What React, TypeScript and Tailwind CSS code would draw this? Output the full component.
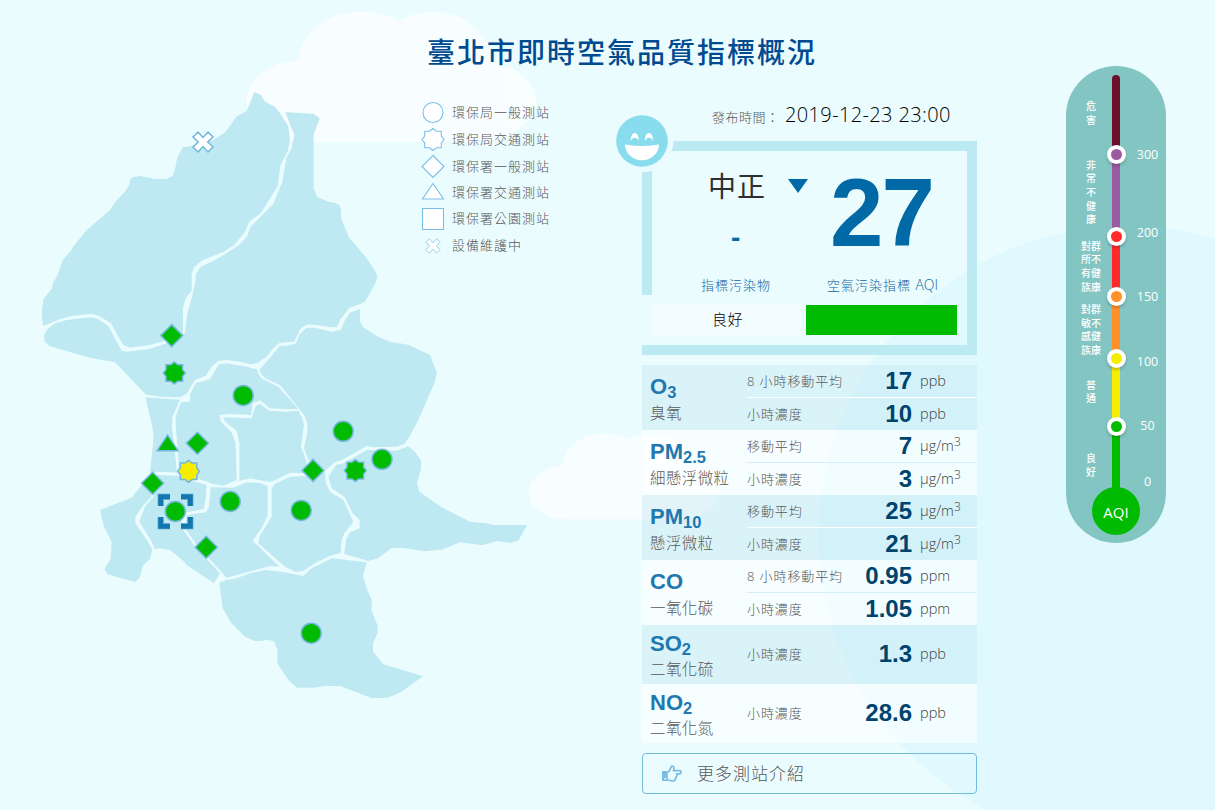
import React from "react";

const cjk = "font-['Open_Sans','Noto_Sans_CJK_TC',sans-serif]";

/* District outlines, in thirds of a pixel. */
const districts: string[] = [
  "763,276 784,285 793,303 825,321 840,339 865,378 870,420 863,454 841,496 833,559 805,603 781,641 748,665 735,696 703,734 670,756 607,781 583,800 575,823 575,872 557,895 549,923 549,1000 490,1024 450,1035 390,1043 370,1035 362,1023 333,970 297,948 275,942 220,947 183,956 130,978 126,952 126,930 130,898 156,865 160,846 170,832 188,780 213,752 219,740 260,690 327,633 350,601 376,574 387,555 391,537 399,532 422,528 465,537 498,537 518,528 526,503 531,475 548,442 570,439 610,428 640,420 676,397 710,349 740,333 752,304",
  "855,336 942,342 959,355 941,405 941,567 953,592 985,605 1003,608 1018,615 1023,630 1023,655 1047,712 1100,775 1125,812 1132,828 1127,848 1095,905 1080,912 1048,923 1020,960 1017,970 1010,982 995,982 945,974 920,974 900,988 883,1025 860,1027 838,1029 820,1045 800,1070 770,1090 750,1093 720,1085 680,1080 655,1083 635,1100 617,1127 585,1140 570,1165 562,1180 540,1192 480,1190 438,1184 345,1087 270,1073 150,1039 135,1026 131,1008 140,990 165,970 200,960 270,952 295,957 325,978 365,1052 380,1055 450,1046 500,1030 540,1005 555,1000 562,940 575,895 586,845 588,823 602,800 642,782 675,762 717,735 740,710 752,680 820,612 837,570 847,545 860,472 875,445 883,405 867,365",
  "1085,925 1080,930 1080,965 1090,982 1130,1008 1170,1025 1225,1034 1290,1065 1311,1120 1303,1150 1280,1202 1255,1260 1230,1307 1213,1332 1190,1340 1120,1342 1100,1338 1070,1355 1025,1380 1005,1387 978,1410 940,1390 925,1380 912,1345 922,1295 922,1270 912,1245 870,1192 840,1155 800,1137 785,1125 778,1110 815,1067 840,1037 860,1037 887,1031 900,1002 920,983 945,983 995,995 1022,990 1035,960 1050,938",
  "770,1108 783,1135 835,1160 895,1227 865,1228 810,1225 780,1201 758,1210 754,1245 690,1242 658,1245 663,1265 695,1297 707,1330 710,1440 670,1457 640,1452 590,1435 537,1420 535,1370 527,1275 527,1250 543,1207 570,1205 570,1182 587,1150 630,1137 657,1093 680,1090 740,1100",
  "436,1192 540,1199 517,1250 516,1280 526,1370 531,1418 485,1415 450,1418 455,1370 461,1310 456,1275",
  "670,1252 755,1255 767,1218 780,1211 807,1232 860,1235 895,1232 905,1250 912,1275 903,1340 920,1385 915,1420 870,1418 822,1442 810,1446 750,1435 745,1437 718,1442 718,1330 710,1292 675,1265",
  "465,1425 530,1427 620,1455 618,1490 612,1527 560,1537 545,1560 547,1585 585,1640 660,1720 642,1750 590,1715 560,1695 553,1685 510,1650 475,1645 465,1648 455,1625 418,1565 435,1520 460,1490",
  "425,1455 395,1493 300,1530 312,1580 335,1625 332,1677 313,1707 322,1723 405,1746 418,1735 430,1695 450,1677 457,1650 445,1627 406,1570 406,1550 430,1515 455,1490 450,1450",
  "632,1462 700,1463 740,1447 780,1449 803,1458 803,1545 785,1585 758,1622 838,1700 810,1698 680,1733 590,1635 555,1585 560,1545 618,1537 627,1520",
  "815,1465 825,1452 870,1430 915,1428 975,1415 978,1450 990,1475 1030,1500 1060,1565 1033,1600 1025,1620 1022,1658 990,1668 950,1687 910,1712 887,1716 855,1700 775,1630 778,1610 815,1550",
  "985,1430 1008,1395 1030,1390 1100,1350 1190,1352 1225,1339 1245,1355 1263,1382 1263,1408 1251,1448 1258,1475 1325,1522 1410,1565 1460,1570 1480,1575 1581,1575 1555,1622 1530,1628 1490,1623 1447,1636 1380,1627 1325,1649 1273,1654 1210,1644 1175,1644 1133,1675 1105,1683 1033,1662 1038,1620 1050,1597 1079,1585 1079,1560 1058,1540 1035,1492 995,1465",
  "658,1748 680,1739 705,1736 750,1720 795,1710 845,1715 910,1728 935,1705 995,1675 1100,1687 1089,1728 1102,1770 1115,1800 1115,1832 1133,1877 1133,1898 1119,1930 1119,1955 1150,1993 1269,2029 1200,2078 1160,2094 1115,2094 1020,2058 975,2058 940,2063 892,2063 867,2042 832,1990 832,1948 822,1923 797,1919 785,1923 763,1923 735,1910 693,1868 668,1825",
];

type Kind = "circle" | "star" | "diamond" | "triangle" | "square" | "cross";

function Shape({ kind }: { kind: Kind }) {
  switch (kind) {
    case "circle":
      return <circle r="10" />;
    case "star":
      return (
        <path d="M0-11 3.4-8.3H8.3V-3.4L11 0 8.3 3.4V8.3H3.4L0 11-3.4 8.3H-8.3V3.4L-11 0-8.3-3.4V-8.3H-3.4Z" />
      );
    case "diamond":
      return <path d="M0-11 11 0 0 11-11 0Z" />;
    case "triangle":
      return <path d="M0-8 10.5 7.5H-10.5Z" />;
    case "square":
      return <path d="M-10.5-10.5H10.5V10.5H-10.5Z" />;
    case "cross":
      return (
        <path d="M0-4.5 5-10 10-5 4.7 0 10 5 5 10 0 4.5-5 10-10 5-4.7 0-10-5-5-10Z" />
      );
  }
}

const GREEN = "#00bb00";
const stations: [Kind, number, number, string][] = [
  ["cross", 203, 142, "#fff"],
  ["diamond", 171.7, 335.6, GREEN],
  ["star", 174.3, 373, GREEN],
  ["circle", 243.2, 395.4, GREEN],
  ["triangle", 167.6, 443.2, GREEN],
  ["diamond", 197.4, 443.2, GREEN],
  ["star", 188.6, 471.3, "#f5ec00"],
  ["diamond", 152.6, 483.2, GREEN],
  ["circle", 343.2, 431.3, GREEN],
  ["circle", 382, 459.3, GREEN],
  ["star", 355.3, 470.6, GREEN],
  ["diamond", 313, 470.4, GREEN],
  ["circle", 230.2, 501.5, GREEN],
  ["circle", 301.2, 510.4, GREEN],
  ["circle", 175.3, 511.5, GREEN],
  ["diamond", 206.2, 547.2, GREEN],
  ["circle", 311.2, 633.2, GREEN],
];

const legend: { kind: Kind; text: string; row: string; y: number }[] = [
  { kind: "circle", text: "環保局一般測站", row: "h-[27px]", y: 14.5 },
  { kind: "star", text: "環保局交通測站", row: "h-[27px]", y: 14.5 },
  { kind: "diamond", text: "環保署一般測站", row: "h-[27px]", y: 14.5 },
  { kind: "triangle", text: "環保署交通測站", row: "h-[26px]", y: 12.5 },
  { kind: "square", text: "環保署公園測站", row: "h-[26px]", y: 14 },
  { kind: "cross", text: "設備維護中", row: "h-[27px]", y: 15 },
];

function Cloud({ transform }: { transform: string }) {
  return (
    <g transform={transform} fill="#fff" opacity="0.68">
      <ellipse cx="368" cy="180" rx="192" ry="145" />
      <ellipse cx="578" cy="190" rx="175" ry="155" />
      <ellipse cx="190" cy="303" rx="170" ry="123" />
      <ellipse cx="700" cy="303" rx="188" ry="123" />
      <rect x="190" y="180" width="510" height="246" />
    </g>
  );
}

function Backdrop() {
  return (
    <svg className="absolute inset-0" width="1215" height="810" viewBox="0 0 1215 810">
      <circle cx="1127.5" cy="535" r="309" fill="#dff9ff" />
      <Cloud transform="translate(240 0) scale(0.33333)" />
      <Cloud transform="translate(524.5 426) scale(0.219)" />
    </svg>
  );
}

const bracket =
  "M160.700 506V496.700H170M181 496.700H190.300V506M190.300 517V526.300H181M170 526.300H160.700V517";

function StationMap() {
  return (
    <svg
      className="col-start-1 row-start-1"
      width="600"
      height="718"
      viewBox="0 92 600 718"
    >
      <g transform="scale(0.33333)" fill="#bee9f2">
        {districts.map((points, i) => (
          <polygon key={i} points={points} />
        ))}
      </g>
      <g fill="none" strokeLinecap="square">
        <path d={bracket} stroke="#7fc3e0" strokeWidth="6.600" strokeLinecap="butt" />
        <path d={bracket} stroke="#1577b0" strokeWidth="5" strokeLinecap="butt" />
      </g>
      {stations.map(([kind, x, y, fill], i) => (
        <g
          key={i}
          transform={`translate(${x} ${y})`}
          fill={fill}
          stroke="#74b7dc"
          strokeWidth="1.5"
        >
          <Shape kind={kind} />
        </g>
      ))}
    </svg>
  );
}

function Legend() {
  return (
    <ul className="col-start-1 row-start-1 ml-[421px] mt-[6px] w-[150px]">
      {legend.map((item) => (
        <li key={item.text} className={`flex items-center ${item.row}`}>
          <svg width="24" height="27" viewBox="0 0 24 27" className="shrink-0 overflow-visible">
            <g
              transform={`translate(12 ${item.y}) scale(${item.kind === "cross" ? 0.72 : 1})`}
              fill="#fff"
              stroke="#7cbfe6"
              strokeWidth="1.1"
            >
              <Shape kind={item.kind} />
            </g>
          </svg>
          <span className="ml-[7px] mt-px whitespace-nowrap text-[13px] font-light leading-none tracking-[1px] text-[#585858]">
            {item.text}
          </span>
        </li>
      ))}
    </ul>
  );
}

function Smiley() {
  return (
    <svg
      className="absolute -left-[42px] -top-[42px]"
      width="64"
      height="64"
      viewBox="-32 -32 64 64"
    >
      <circle r="31.500" fill="#ebfcff" />
      <circle r="25.800" fill="#88dcee" />
      <g fill="#fff">
        <path d="M-11.200 0C-11.400-5-9.500-8-7.200-8S-3.200-5-3.300 0C-4.500-2.200-5.700-3.200-7.200-3.200S-10-2.200-11.200 0Z" />
        <path d="M3 0C2.800-5 4.700-8 7-8S11-5 10.900 0C9.700-2.200 8.500-3.200 7-3.200S4.200-2.200 3 0Z" />
        <path d="M-17 3.300C-10 5.500 10 5.500 17 3.300C17 12 9.500 19.300 0 19.300S-17 12-17 3.300Z" />
      </g>
    </svg>
  );
}

function AqiCard() {
  return (
    <section className="relative h-[214px] w-[335px] border-[10px] border-[#bbeaf2]">
      <div className="absolute -left-[10px] top-[144px] h-[50px] w-[10px] bg-[#ebfcff]" />
      <Smiley />
      <div className="flex h-[154px]">
        <div className="flex w-[165px] flex-col">
          <div className="ml-[56px] mt-[16px] flex h-[38px] items-center">
            <span className="w-[80px] text-[28px] leading-none tracking-[1px] text-[#2f2f2f]">
              中正
            </span>
            <svg width="20" height="14" viewBox="0 0 20 14">
              <path d="M0 0H20L10 14Z" fill="#0069a6" />
            </svg>
          </div>
          <div className="ml-[79px] mt-[13px] h-[48px] font-['Liberation_Sans',sans-serif] text-[28px] font-bold leading-[40px] text-[#0069a6]">
            -
          </div>
          <div className="ml-[49px] mt-[7px] whitespace-nowrap text-[13px] font-light leading-[24px] tracking-[1px] text-[#0f6299]">
            指標污染物
          </div>
        </div>
        <div className="flex w-[150px] flex-col">
          <div className="ml-[13px] mt-[14px] h-[96px] font-['Liberation_Sans',sans-serif] text-[96px] font-bold leading-[95px] tracking-[-2px] text-[#0069a6]">
            27
          </div>
          <div className="ml-[10px] mt-[12px] whitespace-nowrap text-[13px] font-light leading-[24px] tracking-[1px] text-[#0f6299]">
            空氣污染指標 <span className="text-[14px] tracking-normal">AQI</span>
          </div>
        </div>
      </div>
      <div className="flex h-[30px] gap-[4px]">
        <div className="flex w-[150px] items-center bg-[#f3fcff] pb-px pl-[60px] text-[15px] font-light leading-none tracking-[0.500px] text-black">
          良好
        </div>
        <div className="w-[151px] bg-[#00bb00]" />
      </div>
    </section>
  );
}

type Reading = { label: string; value: string; unit: string };
type Pollutant = { name: string; sub?: string; zh: string; readings: Reading[] };

const pollutants: Pollutant[] = [
  {
    name: "O", sub: "3", zh: "臭氧",
    readings: [
      { label: "8 小時移動平均", value: "17", unit: "ppb" },
      { label: "小時濃度", value: "10", unit: "ppb" },
    ],
  },
  {
    name: "PM", sub: "2.5", zh: "細懸浮微粒",
    readings: [
      { label: "移動平均", value: "7", unit: "μg/m" },
      { label: "小時濃度", value: "3", unit: "μg/m" },
    ],
  },
  {
    name: "PM", sub: "10", zh: "懸浮微粒",
    readings: [
      { label: "移動平均", value: "25", unit: "μg/m" },
      { label: "小時濃度", value: "21", unit: "μg/m" },
    ],
  },
  {
    name: "CO", zh: "一氧化碳",
    readings: [
      { label: "8 小時移動平均", value: "0.95", unit: "ppm" },
      { label: "小時濃度", value: "1.05", unit: "ppm" },
    ],
  },
  {
    name: "SO", sub: "2", zh: "二氧化硫",
    readings: [{ label: "小時濃度", value: "1.3", unit: "ppb" }],
  },
  {
    name: "NO", sub: "2", zh: "二氧化氮",
    readings: [{ label: "小時濃度", value: "28.6", unit: "ppb" }],
  },
];

function PollutantRow({ item, tinted }: { item: Pollutant; tinted: boolean }) {
  const double = item.readings.length === 2;
  return (
    <div
      className={`flex ${double ? "h-[65px]" : "h-[59px]"} ${
        tinted ? "bg-[#c0e5f0]/40" : "bg-white/60"
      }`}
    >
      <div className={`w-[105px] pl-[8px] ${double ? "pt-[8px]" : "pt-[5px]"}`}>
        <div className="h-[28px] whitespace-nowrap font-['Liberation_Sans',sans-serif] text-[22px] font-bold leading-[27px] text-[#1f78b0]">
          {item.name}
          {item.sub && (
            <span className="relative top-[4px] text-[16.500px]">{item.sub}</span>
          )}
        </div>
        <div
          className={`whitespace-nowrap text-[15.500px] font-light leading-[24px] tracking-[0.400px] text-[#585858] ${
            double ? "" : "-mt-px"
          }`}
        >
          {item.zh}
        </div>
      </div>
      <div className="flex w-[230px] flex-col">
        {item.readings.map((r, i) => (
          <div
            key={r.label}
            className={`flex items-center ${double ? "h-[32px]" : "h-[59px]"} ${
              i === 1
                ? `box-content border-t ${tinted ? "border-white" : "border-[#d2eef6]"}`
                : ""
            }`}
          >
            <span className="w-[104px] whitespace-nowrap text-[13px] font-light leading-none tracking-[0.900px] text-[#585858]">
              {r.label}
            </span>
            <span
              className={`w-[61px] text-right font-['Liberation_Sans',sans-serif] text-[24px] font-bold leading-none text-[#00436d] ${
                double ? "" : "-mt-[2px]"
              }`}
            >
              {r.value}
            </span>
            <span className="ml-[8px] whitespace-nowrap text-[14.500px] font-light leading-none text-[#404040]">
              {r.unit}
              {r.unit === "μg/m" && (
                <span className="relative -top-[5px] text-[12px]">3</span>
              )}
            </span>
          </div>
        ))}
      </div>
    </div>
  );
}

function PointingHand() {
  return (
    <svg className="ml-[1px] mr-[15px]" width="20" height="17" viewBox="0 0 20 17">
      <path
        fillRule="evenodd"
        fill="#7bbce3"
        d="M1 6H5.800V16H1Q0 16 0 15V7Q0 6 1 6ZM3.200 12.800A1 1 0 1 0 3.200 14.800 1 1 0 1 0 3.200 12.800Z"
      />
      <path
        fill="none"
        stroke="#7bbce3"
        strokeWidth="1.700"
        strokeLinejoin="round"
        d="M6 6.800C8 6.500 8.300 3 9.600 1.200C11.800 0.800 12.500 3 11.400 5.600H17.300C19.600 5.600 19.600 8.800 17.300 8.800H14.500C15.300 9.800 15 11.200 14 11.700C14.400 12.900 14 13.800 13 14.100C13.100 15.400 12.400 16 11 16C9 16 7.800 15 6 15"
      />
    </svg>
  );
}

const scaleLabels: { lines: string[]; gap: string }[] = [
  { lines: ["危", "害"], gap: "mt-[34px]" },
  { lines: ["非", "常", "不", "健", "康"], gap: "mt-[31.700px]" },
  { lines: ["對群", "所不", "有健", "族康"], gap: "mt-[13px]" },
  { lines: ["對群", "敏不", "感健", "族康"], gap: "mt-[9px]" },
  { lines: ["普", "通"], gap: "mt-[21px]" },
  { lines: ["良", "好"], gap: "mt-[46.500px]" },
];

const scaleSegments = [
  "h-[79px] bg-[#6b0f2a] rounded-t-full",
  "h-[82px] bg-[#9a5ba0]",
  "h-[61px] bg-[#ff2b2b]",
  "h-[62px] bg-[#ff9128]",
  "h-[68px] bg-[#f5ec00]",
  "h-[64px] bg-[#00bb00]",
];

const scaleKnobs = [
  "top-[79px] bg-[#9a5ba0]",
  "top-[161px] bg-[#ff2b2b]",
  "top-[221.500px] bg-[#ff9128]",
  "top-[283.500px] bg-[#f5ec00]",
  "top-[351.500px] bg-[#00bb00]",
];

const scaleNumbers = [
  { n: "300", gap: "mt-[79px]" },
  { n: "200", gap: "mt-[58px]" },
  { n: "150", gap: "mt-[44px]" },
  { n: "100", gap: "mt-[45px]" },
  { n: "50", gap: "mt-[44px]" },
  { n: "0", gap: "mt-[36px]" },
];

function AqiScale() {
  return (
    <aside className="-mt-[26px] ml-[89px] flex h-[477px] w-[100px] rounded-full bg-[#83c5c3] text-white">
      <div className="flex w-[50px] flex-col items-center text-[10px] font-medium leading-[13.600px]">
        {scaleLabels.map((label, i) => (
          <div key={i} className={`${label.gap} text-center`}>
            {label.lines.map((line) => (
              <div key={line}>{line}</div>
            ))}
          </div>
        ))}
      </div>
      <div className="relative -ml-[4px] mt-[9px] w-[8px]">
        {scaleSegments.map((cls) => (
          <div key={cls} className={cls} />
        ))}
        {scaleKnobs.map((cls) => (
          <div
            key={cls}
            className={`absolute -left-[5.500px] -mt-[9.500px] size-[19px] rounded-full border-4 border-white shadow-[0_2px_3px_rgba(0,0,0,0.2)] ${cls}`}
          />
        ))}
        <div className="absolute -left-[20px] top-[412px] flex size-[48px] items-center justify-center rounded-full bg-[#00bb00] pt-[2px] text-[15px] leading-none">
          AQI
        </div>
      </div>
      <div className="flex w-[46px] flex-col items-center pl-[9px] text-[12.500px] leading-[20px]">
        {scaleNumbers.map((item) => (
          <div key={item.n} className={item.gap}>
            {item.n}
          </div>
        ))}
      </div>
    </aside>
  );
}

export default function App() {
  return (
    <div className={`relative h-[810px] w-[1215px] overflow-hidden bg-[#ebfcff] ${cjk}`}>
      <Backdrop />
      <div className="relative">
        <h1 className="flex h-[92px] items-center pl-[427px] pt-[12px] text-[28px] font-medium leading-none tracking-[2px] text-[#004a8f]">
          臺北市即時空氣品質指標概況
        </h1>
        <div className="flex items-start">
          <div className="grid w-[642px] items-start">
            <StationMap />
            <Legend />
          </div>
          <main className="relative w-[335px]">
            <div className="flex h-[49px] items-center pl-[70px]">
              <span className="mt-px w-[73px] whitespace-nowrap text-[13px] font-light leading-none tracking-[0.500px] text-[#585858]">
                發布時間：
              </span>
              <span className="-mt-[3px] whitespace-nowrap text-[20px] font-light leading-none tracking-[0.370px] text-black">
                2019-12-23 23:00
              </span>
            </div>
            <AqiCard />
            <div className="mt-[10px]">
              {pollutants.map((item, i) => (
                <PollutantRow key={item.zh} item={item} tinted={i % 2 === 0} />
              ))}
            </div>
            <button className="mt-[10px] flex h-[41px] w-full items-center rounded-[4px] border border-[#72badf] pb-px pl-[18px] text-[17px] font-light leading-none tracking-[1px] text-[#585858]">
              <PointingHand />
              更多測站介紹
            </button>
          </main>
          <AqiScale />
        </div>
      </div>
    </div>
  );
}
